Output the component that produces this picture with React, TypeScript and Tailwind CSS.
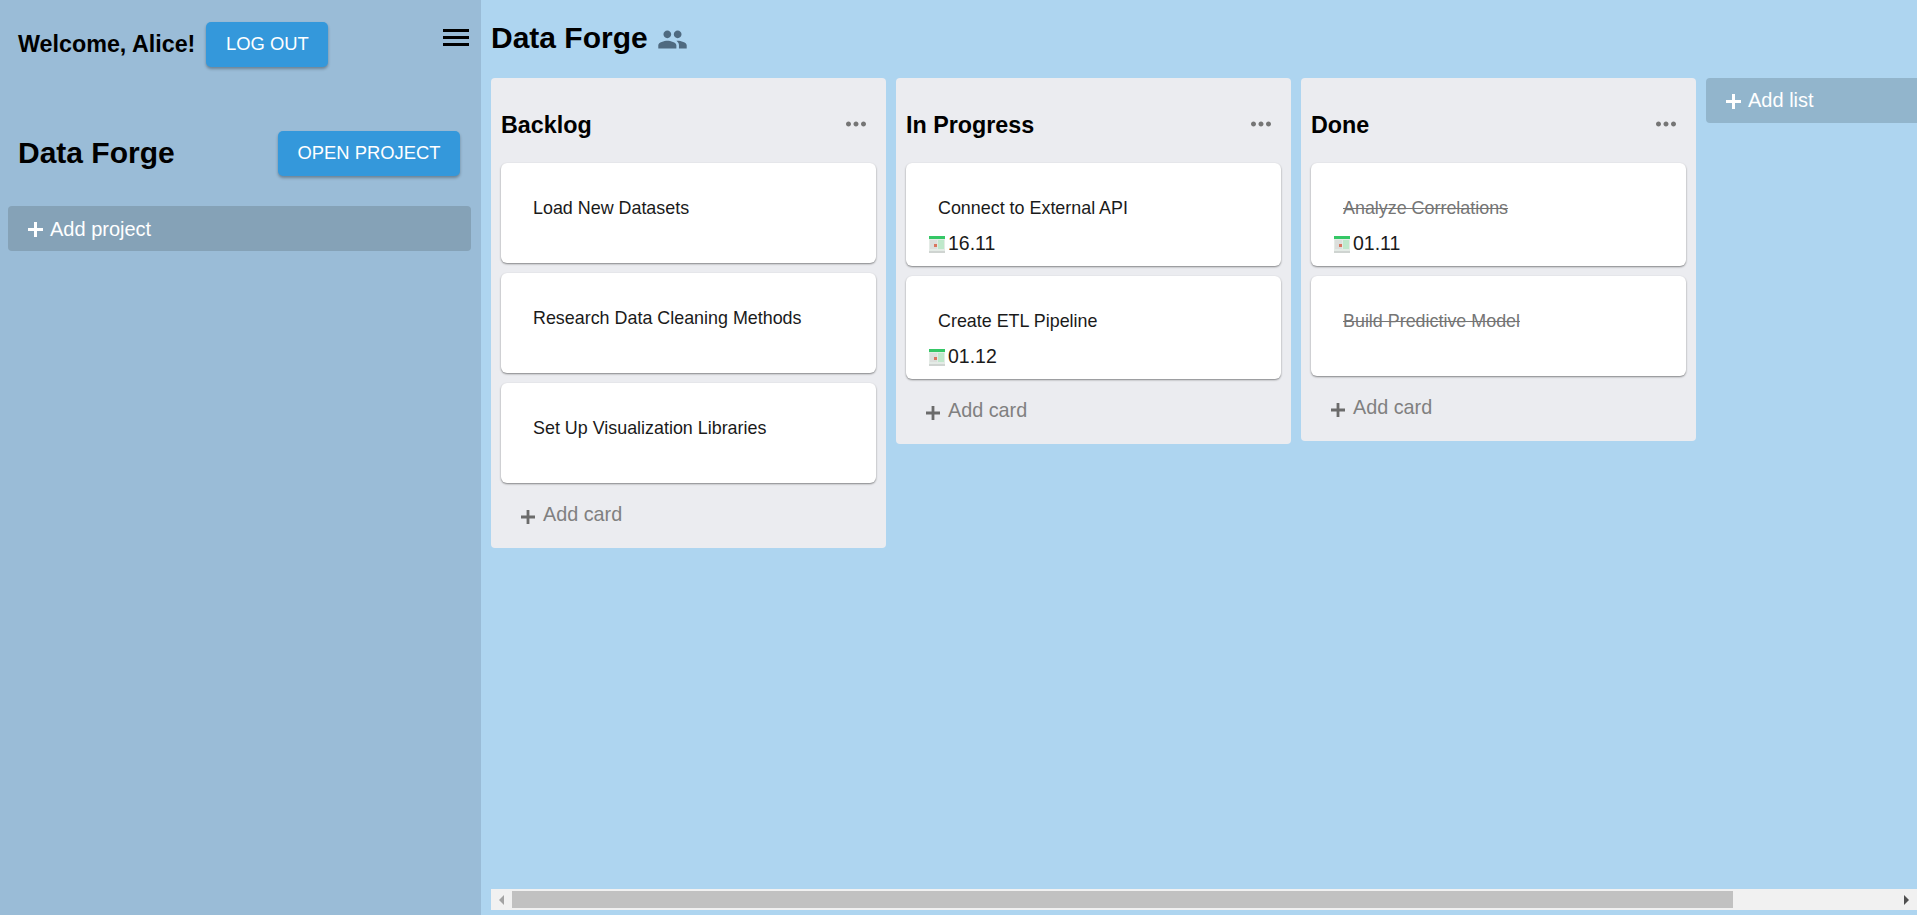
const PEOPLE =
  "M16 11c1.66 0 2.99-1.34 2.99-3S17.66 5 16 5c-1.66 0-3 1.34-3 3s1.34 3 3 3zm-8 0c1.66 0 2.99-1.34 2.99-3S9.66 5 8 5C6.34 5 5 6.34 5 8s1.34 3 3 3zm0 2c-2.33 0-7 1.17-7 3.5V19h14v-2.5c0-2.33-4.67-3.5-7-3.5zm8 0c-.29 0-.62.02-.97.05 1.16.84 1.97 1.97 1.97 3.45V19h6v-2.5c0-2.33-4.67-3.5-7-3.5z";
const MORE =
  "M6 10c-1.1 0-2 .9-2 2s.9 2 2 2 2-.9 2-2-.9-2-2-2zm12 0c-1.1 0-2 .9-2 2s.9 2 2 2 2-.9 2-2-.9-2-2-2zm-6 0c-1.1 0-2 .9-2 2s.9 2 2 2 2-.9 2-2-.9-2-2-2z";

type Card = { title: string; date?: string; done?: boolean };

const LISTS: { name: string; cards: Card[] }[] = [
  {
    name: "Backlog",
    cards: [
      { title: "Load New Datasets" },
      { title: "Research Data Cleaning Methods" },
      { title: "Set Up Visualization Libraries" },
    ],
  },
  {
    name: "In Progress",
    cards: [
      { title: "Connect to External API", date: "16.11" },
      { title: "Create ETL Pipeline", date: "01.12" },
    ],
  },
  {
    name: "Done",
    cards: [
      { title: "Analyze Correlations", date: "01.11", done: true },
      { title: "Build Predictive Model", done: true },
    ],
  },
];

function Plus({ className }: { className: string }) {
  return (
    <svg viewBox="0 0 14 14" className={className} fill="currentColor">
      <path d="M5.6 0h2.8v5.6H14v2.8H8.4V14H5.6V8.4H0V5.6h5.6z" />
    </svg>
  );
}

function CalendarIcon() {
  return (
    <svg viewBox="0 0 16 17" className="h-[17px] w-[16px] shrink-0">
      <rect width="16" height="17" fill="#e4ebe6" />
      <rect width="16" height="3" fill="#35c766" />
      <rect x="9" y="4" width="6" height="9" fill="#bfe8cb" />
      <rect x="1" y="4" width="7" height="9" fill="#dcdfdc" />
      <rect x="5" y="8" width="3" height="3" fill="#d9765f" />
      <rect y="15" width="16" height="2" fill="#cfd4d1" />
    </svg>
  );
}

function BlueButton({ children, className }: { children: string; className: string }) {
  return (
    <button
      className={`h-[45px] rounded-[5px] bg-[#3498db] text-[18.4px] text-white shadow-[0_2px_3px_rgba(0,0,0,0.3)] ${className}`}
    >
      {children}
    </button>
  );
}

function TaskCard({ card }: { card: Card }) {
  return (
    <div
      className={`rounded-[6px] bg-white pt-[33px] shadow-[0_1px_2px_rgba(0,0,0,0.45)] ${
        card.date ? "h-[103px]" : "h-[100px]"
      }`}
    >
      <div
        className={`pl-[32px] text-[17.9px] leading-[24px] ${
          card.done ? "text-[#757575] line-through" : "text-[#1a1a1a]"
        }`}
      >
        {card.title}
      </div>
      {card.date && (
        <div className="mt-[12px] flex h-[24px] items-center gap-[3px] pl-[23px] text-[19.5px] text-[#1a1a1a]">
          <CalendarIcon />
          <span>{card.date}</span>
        </div>
      )}
    </div>
  );
}

function List({ name, cards }: { name: string; cards: Card[] }) {
  return (
    <div className="w-[395px] shrink-0 rounded-[4px] bg-[#ebecf0] px-[10px]">
      <div className="flex h-[85px] items-start justify-between pt-[32px]">
        <h2 className="text-[23.3px] leading-[30px] font-bold text-black">{name}</h2>
        <svg viewBox="0 0 24 24" className="mr-[5px] mt-[-1px] h-[30px] w-[30px] fill-[#757575]">
          <path d={MORE} />
        </svg>
      </div>
      <div className="flex flex-col gap-[10px]">
        {cards.map((c) => (
          <TaskCard key={c.title} card={c} />
        ))}
      </div>
      <div className="flex h-[65px] items-center gap-[8px] pl-[20px] pb-[1px] text-[19.8px] text-[#808080]">
        <Plus className="mt-[3px] h-[14px] w-[14px] text-[#6b6b6b]" />
        <span>Add card</span>
      </div>
    </div>
  );
}

export default function App() {
  return (
    <div className="flex h-[915px] w-[1917px] overflow-hidden bg-[#aed5f0] font-['Liberation_Sans',Arial,sans-serif]">
      {/* Sidebar */}
      <aside className="w-[481px] shrink-0 bg-[#9abcd7]">
        <div className="flex items-start pt-[22px] pl-[18px]">
          <span className="mr-[11px] text-[23.3px] leading-[44px] font-bold text-black">Welcome, Alice!</span>
          <BlueButton className="w-[122px] pb-[1px]">LOG OUT</BlueButton>
          <div className="ml-[115px] mt-[7px] flex w-[26px] flex-col gap-[4px]">
            <div className="h-[3px] bg-black" />
            <div className="h-[3px] bg-black" />
            <div className="h-[3px] bg-black" />
          </div>
        </div>
        <div className="mt-[64px] flex h-[45px] items-center justify-between pl-[18px] pr-[21px]">
          <span className="pb-[2px] text-[30px] leading-[40px] font-bold text-black">Data Forge</span>
          <BlueButton className="w-[182px] pb-[2px]">OPEN PROJECT</BlueButton>
        </div>
        <button className="mx-[8px] mt-[30px] flex h-[45px] w-[463px] items-center gap-[7px] rounded-[4px] bg-[#85a2b7] pl-[20px] text-[20px] text-white">
          <Plus className="mt-[2px] h-[15px] w-[15px]" />
          <span>Add project</span>
        </button>
      </aside>

      {/* Board */}
      <main className="flex min-w-0 flex-1 flex-col pl-[10px]">
        <header className="flex h-[78px] shrink-0 items-center gap-[9px]">
          <h1 className="pb-[4px] text-[30px] font-bold text-black">Data Forge</h1>
          <svg viewBox="0 0 24 24" className="h-[31px] w-[31px] fill-[#4f6a80]">
            <path d={PEOPLE} />
          </svg>
        </header>
        <div className="flex flex-1 items-start gap-[10px] overflow-hidden">
          {LISTS.map((l) => (
            <List key={l.name} name={l.name} cards={l.cards} />
          ))}
          <button className="flex h-[45px] w-[395px] shrink-0 items-center gap-[7px] rounded-[4px] bg-[#92b5cc] pl-[20px] pb-[2px] text-[20px] text-white">
            <Plus className="mt-[4px] h-[15px] w-[15px]" />
            <span>Add list</span>
          </button>
        </div>
        {/* Horizontal scrollbar */}
        <div className="mb-[5px] flex h-[21px] shrink-0 items-center bg-[#f1f1f1]">
          <div className="flex w-[21px] justify-center">
            <div className="h-0 w-0 border-y-[5px] border-r-[5px] border-y-transparent border-r-[#a3a3a3]" />
          </div>
          <div className="h-[17px] w-[1221px] bg-[#c1c1c1]" />
          <div className="flex-1" />
          <div className="flex w-[21px] justify-center">
            <div className="h-0 w-0 border-y-[5px] border-l-[5px] border-y-transparent border-l-[#505050]" />
          </div>
        </div>
      </main>
    </div>
  );
}
